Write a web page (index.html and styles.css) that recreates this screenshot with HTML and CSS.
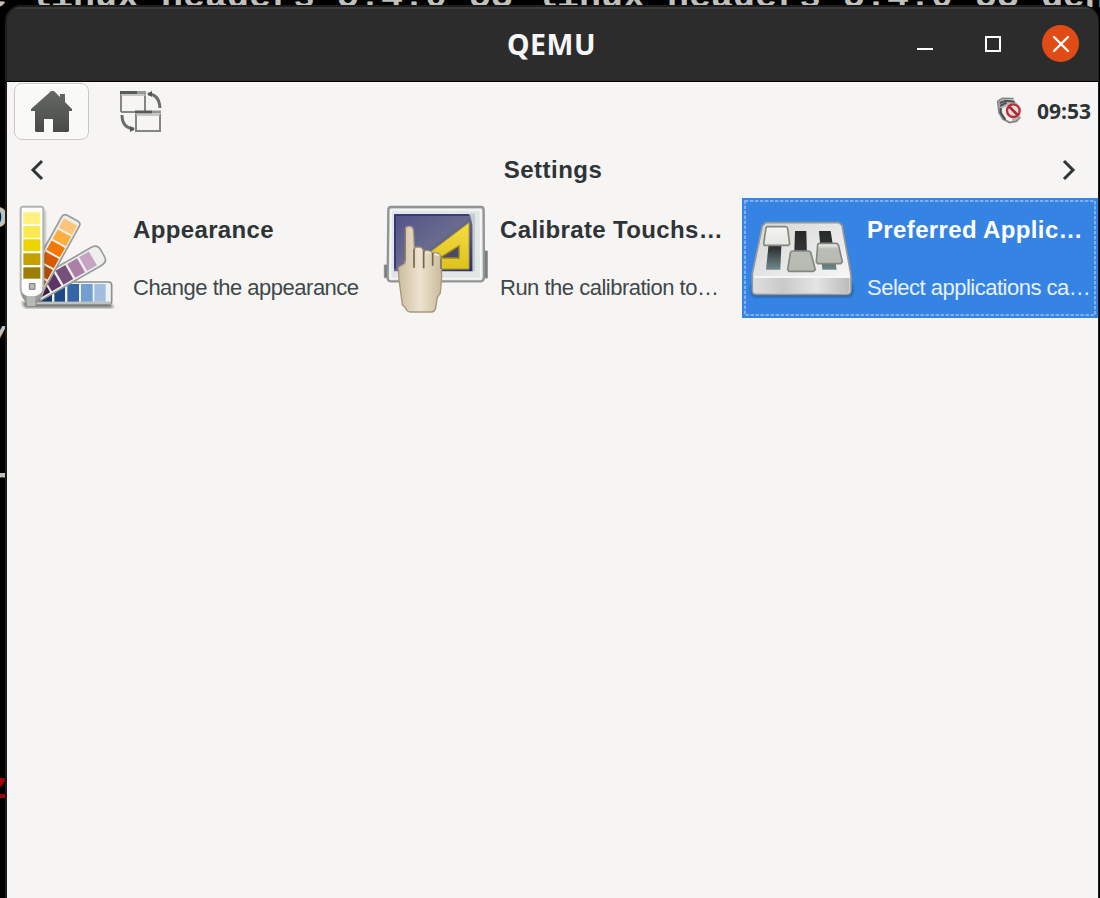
FILE: index.html
```html
<!DOCTYPE html>
<html lang="en">
<head>
<meta charset="utf-8">
<title>QEMU</title>
<link rel="stylesheet" href="styles.css">
</head>
<body>
<div class="desktop">
  <div class="term term-top">e linux-headers-5.4.0-53 linux-headers-5.4.0-53-gene</div>
  <div class="term term-o">o</div>
  <div class="term term-slash">/</div>
  <div class="term term-r">r</div>
  <div class="term term-z">z</div>
  <main class="window">
    <header class="titlebar">
      <h1 class="title">QEMU</h1>
      <div class="controls">
        <svg class="ctl" width="16" height="16" viewBox="0 0 16 16"><path d="M0 12h16v2H0z" fill="#fff"/></svg>
        <svg class="ctl" width="16" height="16" viewBox="0 0 16 16"><path d="M1 1h14v14H1z" fill="none" stroke="#fff" stroke-width="2"/></svg>
        <span class="close"><svg width="16" height="16" viewBox="0 0 16 16"><path d="M1 1l14 14M15 1L1 15" stroke="#fff" stroke-width="2.300" stroke-linecap="round"/></svg></span>
      </div>
    </header>
    <section class="content">
      <nav class="panel">
        <span class="home"><svg width="42" height="42" viewBox="0 0 42 42"><defs><linearGradient id="hg" x2="0" y2="1"><stop stop-color="#666963"/><stop offset="1" stop-color="#494b47"/></linearGradient></defs><path d="M20 0h3l6 6V3h5v8l7 7v2h-3v20l-1 1H22V28h-9v13H5l-1-1V20H0v-2L18 2z" fill="url(#hg)"/></svg></span>
        <svg class="switch" width="42" height="42" viewBox="0 0 42 42" fill="none"><path d="M1 3v18M25 3v17M1 21h15M16 23v18M40 23v18M16 40h25" stroke="#858783" stroke-width="2"/><path d="M0 1.500h17M15 21h17" stroke="#595b57" stroke-width="3"/><path d="M17 1.500h9M32 21h9" stroke="#969894" stroke-width="3"/><path d="M1 4h25M16 24h24" stroke="#b6b8b4" stroke-width="1.500"/><path d="M28 3q11 0 12 14M2 24q0 13 12 14" stroke="#6b6e69" stroke-width="3"/><path d="M27 3l5-3v6zM15 38l-5-3v6z" fill="#555753"/></svg>
        <div class="tray">
          <svg width="27" height="28" viewBox="0 0 81 84"><path d="M8 12l12-5 30 2 14 10-3 30 12 7-13 18-20 5-22-10L6 47z" fill="#b5b6b5"/><path d="M19 34l33-15-4 56-16-5-13-13z" fill="#efefee"/><path d="M5 12l15-8 33 1M5 12l4 33 12 20 20 12 21-4 11-13" fill="none" stroke="#858585" stroke-width="5"/><path d="M11 18l19-7 26 3M12 27l20-10M14 33v14l14 21" fill="none" stroke="#4e5050" stroke-width="6"/><circle cx="52" cy="41" r="19" fill="#ddd" stroke="#bd3037" stroke-width="7"/><path d="M39 28l26 26" stroke="#a9272e" stroke-width="8"/></svg>
          <time class="clock">09:53</time>
        </div>
      </nav>
      <div class="heading">
        <svg width="14" height="22" viewBox="0 0 14 22"><path d="M12 2L3 11l9 9" fill="none" stroke="#2e3436" stroke-width="3"/></svg>
        <h2 class="heading-text">Settings</h2>
        <svg width="14" height="22" viewBox="0 0 14 22"><path d="M2 2l9 9-9 9" fill="none" stroke="#2e3436" stroke-width="3"/></svg>
      </div>
      <div class="cards">
        <article class="card">
          <div class="icon"><svg class="i1" width="104" height="110" viewBox="45 30 312 330">
            <defs><linearGradient id="wg" x2="0" y2="1"><stop stop-color="#fff"/><stop offset="1" stop-color="#cbcdca"/></linearGradient><filter id="bl"><feGaussianBlur stdDeviation="5"/></filter></defs>
            <path d="M65 335h262l15 18H75z" fill="#444" opacity=".75" filter="url(#bl)"/>
            <path d="M100 276h226q9 0 9 9v49q0 9-9 9H100z" fill="#f1f2f0" stroke="#8d908b" stroke-width="5"/><path d="M100 338h232" stroke="#c0c1bf" stroke-width="7"/>
            <path d="M115 282h41v53h-41z" fill="#16366b"/><path d="M163 282h32v53h-32z" fill="#204a87"/><path d="M202 282h35v53h-35z" fill="#3465a4"/><path d="M243 282h35v53h-35z" fill="#729fcf"/><path d="M283 282h34v53h-34z" fill="#a1bee0"/>
            <g transform="translate(106 306) rotate(-30)"><path d="M0-32h213q20 0 20 20v22q0 20-20 20H0z" fill="#eff0ee" stroke="#999c97" stroke-width="5"/><path d="M8-25h30v48H8z" fill="#3f1e47"/><path d="M44-25h33v48H44z" fill="#5c3566"/><path d="M84-25h34v48H84z" fill="#75507b"/><path d="M125-25h34v48h-34z" fill="#ad7fa8"/><path d="M166-25h34v48h-34z" fill="#c8a4c4"/></g>
            <g transform="translate(95 307) rotate(-61)"><path d="M0-31h242q12 0 12 12v36q0 12-12 12H0z" fill="#edeeec" stroke="#999c97" stroke-width="5"/><path d="M20-23h30v46H20z" fill="#b94700"/><path d="M57-23h32v46H57z" fill="#b94700"/><path d="M95-23h32v46H95z" fill="#d85a00"/><path d="M133-23h32v46h-32z" fill="#f57900"/><path d="M171-23h32v46h-32z" fill="#fcaf3e"/><path d="M209-23h32v46h-32z" fill="#ffc67a"/></g>
            <path d="M137 60v215l-10 35-20 19 5-260z" fill="#555" opacity=".35" filter="url(#bl)"/>
            <path d="M62 57q0-7 7-7h54q7 0 7 7v235q0 38-34 44-34-6-34-44z" fill="#fff" stroke="#b2b5af" stroke-width="6"/>
            <path d="M70 67h51v35H70z" fill="#fff080"/><path d="M70 108h51v35H70z" fill="#fce94f"/><path d="M70 148h51v36H70z" fill="#edd400"/><path d="M70 190h51v35H70z" fill="#c4a000"/><path d="M70 232h51v34H70z" fill="#9b7d00"/>
            <path d="M63 305q20 18 32 14 18 2 34-17-4 36-33 45-28-8-33-42z" fill="#8c8e8a" opacity=".85"/><path d="M88 281h17v17H88z" fill="#bbb" stroke="#777" stroke-width="3"/><path d="M80 319h26v29H80z" fill="#b7b9b5"/></svg></div>
          <div class="text"><h3 class="name">Appearance</h3><p class="desc">Change the appearance</p></div>
        </article>
        <article class="card">
          <div class="icon"><svg class="i2" width="110" height="115" viewBox="15 30 330 345">
            <defs><linearGradient id="bg" x2="1" y2="1"><stop stop-color="#50528a"/><stop offset=".5" stop-color="#6a6b8e"/><stop offset="1" stop-color="#292a75"/></linearGradient><linearGradient id="yg" x2="0" y2="1"><stop stop-color="#f5dd43"/><stop offset="1" stop-color="#dcc21c"/></linearGradient><linearGradient id="skin" x2="1" y2="0"><stop stop-color="#cdbd9f"/><stop offset=".5" stop-color="#eee3d0"/><stop offset="1" stop-color="#cbbb9c"/></linearGradient></defs>
            <path d="M28 225h15v38H28zM322 183h15v81h-15z" fill="#777b7d" stroke="#909294" stroke-width="3"/>
            <path d="M48 51h270q8 0 8 9l1 199q0 15-10 15H47q-10 0-9-15l2-199q0-9 8-9z" fill="#e2e6e4" stroke="#929495" stroke-width="7"/><path d="M48 60h269v206H46z" fill="none" stroke="#f5f7f5" stroke-width="5"/>
            <path d="M57 72h225l11 12v160H57z" fill="url(#bg)"/><path d="M60 75h222M60 75v161" stroke="#303270" stroke-width="5"/><path d="M284 70h16v174h-7V107z" fill="#c2cfce"/>
            <path d="M282 98v139H161v-47z" fill="url(#yg)" stroke="#b49d19" stroke-width="3"/><path d="M252 168v36h-58z" fill="#4c4b65" stroke="#988522" stroke-width="4"/>
            <path d="M91 119q0-10 11-10 12 0 13 11l3 56q7-8 20-3l9 11q14-6 23 4 22-3 27 11l3 60-4 50-9 13-5 32q-3 11-11 12h-65q-10 0-13-10l-11-12-4-30-6-45-2-37 20-12z" fill="url(#skin)" stroke="#a6987d" stroke-width="4"/>
            <path d="M117 176v57M146 183v52M173 189v38" stroke="#75654c" stroke-width="5"/><path d="M123 177l18 2M151 187l17 2M178 192l15 5" fill="none" stroke="#f1e5cf" stroke-width="6"/><path d="M90 118v94M198 207v30" stroke="#796b60" stroke-width="4"/></svg></div>
          <div class="text"><h3 class="name">Calibrate Touchs…</h3><p class="desc">Run the calibration to…</p></div>
        </article>
        <article class="card selected">
          <svg class="focus" width="356" height="120"><rect x="3" y="3" width="350" height="114" fill="none" stroke="#7fb0ed" stroke-width="2" stroke-dasharray="3.500 1.500"/></svg>
          <div class="icon"><svg class="i3" width="115" height="90" viewBox="30 75 345 270">
            <defs><linearGradient id="mg" x2="1" y2="1"><stop stop-color="#d5d6d4"/><stop offset="1" stop-color="#fafafa"/></linearGradient><linearGradient id="fg" x2="1" y2="0"><stop stop-color="#dedede"/><stop offset=".3" stop-color="#c9c9c9"/><stop offset=".65" stop-color="#e4e4e4"/><stop offset="1" stop-color="#bbb"/></linearGradient><linearGradient id="sg" x2="0" y2="1"><stop stop-color="#282a2a"/><stop offset=".45" stop-color="#303333"/><stop offset="1" stop-color="#718b8d"/></linearGradient><linearGradient id="kg" x2="0" y2="1"><stop stop-color="#f4f5f1"/><stop offset=".42" stop-color="#e4e6e1"/><stop offset=".5" stop-color="#b9bdb5"/><stop offset="1" stop-color="#b6bab1"/></linearGradient></defs>
            <rect x="48" y="275" width="306" height="46" rx="15" fill="#17467f" opacity=".65" filter="url(#bl)"/>
            <path d="M92 98h219l10 8 27 150v43q0 14-14 14H64q-12 0-12-14v-48l30-143z" fill="url(#mg)" stroke="#969996" stroke-width="5"/><path d="M57 263h287v36q0 10-11 10H67q-10 0-10-10z" fill="url(#fg)"/><path d="M58 261h285" stroke="#fafafa" stroke-width="4"/>
            <path d="M105 123h36l-5 116H93zM180 123h34l3 116h-41zM252 123h35l18 116h-43z" fill="url(#sg)"/>
            <path d="M97 110h55q5 0 6 6l6 46-4 4H88l-2-5 7-47q1-4 4-4zM172 183h48q6 0 8 7l13 49-6 5h-73l-4-5 8-50q1-6 6-6zM253 160h50q6 0 8 7l11 49-5 5h-69l-4-5 4-51q0-5 5-5z" fill="url(#kg)" stroke="#848880" stroke-width="5"/></svg></div>
          <div class="text"><h3 class="name">Preferred Applic…</h3><p class="desc">Select applications ca…</p></div>
        </article>
      </div>
    </section>
  </main>
</div>
</body>
</html>
```
FILE: styles.css
```css
* { box-sizing: border-box; margin: 0; padding: 0; }
body { width: 1100px; height: 898px; overflow: hidden; background: #000; font-family: "Liberation Sans", sans-serif; }
svg { display: block; flex: none; }
.desktop { position: relative; height: 898px; padding: 5px 1px 0 5px; overflow: hidden; }
.term { position: absolute; font: bold 36.67px/40px "Liberation Mono", monospace; color: #c0c0bc; white-space: pre; }
.term-top { left: -15px; top: -23px; }
.term-o { left: -14px; top: 197px; }
.term-slash { left: -14px; top: 323px; }
.term-r { left: -14px; top: 463px; }
.term-z { left: -14px; top: 768px; color: #a00808; }
.window { position: relative; height: 893px; border: solid #1c1c1c; border-width: 2px 1px 0 2px; border-radius: 16px 16px 0 0; background: #2c2c2c; overflow: hidden; }
.titlebar { height: 75px; border-top: 2px solid #3a3a3a; border-bottom: 1px solid #000; background: #2c2c2c; display: grid; grid-template-columns: 1fr auto 1fr; align-items: center; padding-bottom: 3px; }
.title { grid-column: 2; font: bold 28.5px/36px "Noto Sans", sans-serif; letter-spacing: .5px; color: #f7f7f7; padding-right: 2px; }
.controls { display: flex; align-items: center; justify-content: flex-end; padding-right: 19px; }
.ctl { margin-right: 52px; }
.ctl + .ctl { margin-right: 41px; }
.close { width: 37px; height: 37px; border-radius: 50%; background: #e14b16; display: grid; place-items: center; }
.content { height: 816px; background: #f6f5f4; }
.panel { display: flex; height: 60px; align-items: flex-start; padding: 1px 7px 0 7px; }
.home { width: 75px; height: 57px; border: 1px solid #cfc8c2; border-radius: 8px; background: #f9f9f7; display: grid; place-items: center; box-shadow: inset 0 2px #fff; }
.switch { margin: 8px 0 0 31px; }
.tray { margin-left: auto; display: flex; align-items: center; height: 56px; gap: 14px; }
.clock { font: bold 21px/28px "Noto Sans", sans-serif; color: #2e3436; padding-bottom: 1px; }
.heading { display: flex; align-items: center; height: 56px; padding: 0 22px 0 23px; }
.heading-text { flex: 1; text-align: center; font-size: 24px; line-height: 28px; color: #2e3436; letter-spacing: .5px; }
.cards { display: grid; grid-template-columns: repeat(3, 356px); column-gap: 11px; padding-left: 1px; }
.card { height: 120px; display: flex; position: relative; color: #2e3436; }
.icon { width: 125px; flex: none; }
.i1 { margin: 2px 0 0 7px; }
.i2 { margin: 2px 0 0 5px; }
.i3 { margin: 17px 0 0 3px; }
.text { display: flex; flex-direction: column; gap: 30px; padding-top: 18px; white-space: nowrap; }
.name { font-size: 24px; line-height: 28px; letter-spacing: .36px; }
.desc { font-size: 22px; line-height: 28px; letter-spacing: -.5px; color: #40484a; }
.selected { background: #3584e4; color: #fff; }
.selected .desc { color: #e6f0fc; }
.focus { position: absolute; inset: 0; }
```
